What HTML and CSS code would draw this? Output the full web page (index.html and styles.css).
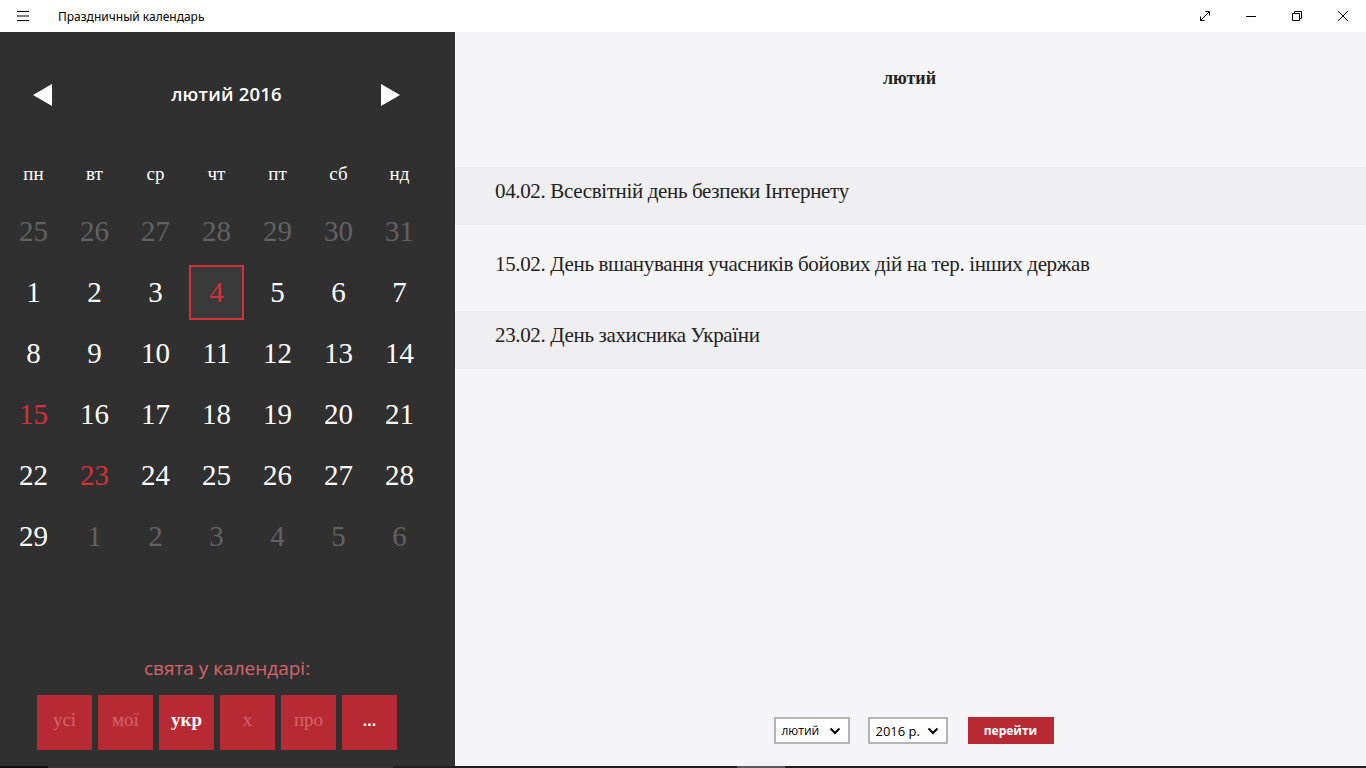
FILE: index.html
```html
<!DOCTYPE html>
<html lang="uk">
<head>
<meta charset="utf-8">
<title>Праздничный календарь</title>
<link rel="stylesheet" href="styles.css">
</head>
<body>
<div class="app">
  <header class="titlebar">
    <div class="tb-left">
      <svg class="hamburger" width="14" height="12" viewBox="0 0 14 12"><path d="M1 1.5h12M1 6h12M1 10.5h12" stroke="#000" stroke-width="1" fill="none"/></svg>
      <span class="tb-title">Праздничный календарь</span>
    </div>
    <div class="tb-controls">
      <div class="tb-btn"><svg width="12" height="12" viewBox="0 0 12 12"><path d="M1.5 10.5L10.5 1.5M1.5 10.5V6.5M1.5 10.5H5.5M10.5 1.5H6.5M10.5 1.5V5.5" stroke="#000" stroke-width="1" fill="none"/></svg></div>
      <div class="tb-btn"><svg width="12" height="12" viewBox="0 0 12 12"><path d="M1 6.5h10" stroke="#000" stroke-width="1" fill="none"/></svg></div>
      <div class="tb-btn"><svg width="12" height="12" viewBox="0 0 12 12"><path d="M1.5 3.5h7v7h-7z M3.5 3.5V1.5h7v7h-2" stroke="#000" stroke-width="1" fill="none"/></svg></div>
      <div class="tb-btn"><svg width="12" height="12" viewBox="0 0 12 12"><path d="M1 1l10 10M11 1L1 11" stroke="#000" stroke-width="1" fill="none"/></svg></div>
    </div>
  </header>

  <main class="main">
    <section class="cal">
      <div class="cal-head">
        <svg class="arrow" width="19" height="22" viewBox="0 0 19 22"><path d="M19 0V22L0 11Z" fill="#fff"/></svg>
        <div class="cal-title">лютий 2016</div>
        <svg class="arrow" width="19" height="22" viewBox="0 0 19 22"><path d="M0 0V22L19 11Z" fill="#fff"/></svg>
      </div>
      <div class="weekdays">
        <span>пн</span><span>вт</span><span>ср</span><span>чт</span><span>пт</span><span>сб</span><span>нд</span>
      </div>
      <div class="days">
        <span class="d dim">25</span><span class="d dim">26</span><span class="d dim">27</span><span class="d dim">28</span><span class="d dim">29</span><span class="d dim">30</span><span class="d dim">31</span>
        <span class="d">1</span><span class="d">2</span><span class="d">3</span><span class="d sel"><i>4</i></span><span class="d">5</span><span class="d">6</span><span class="d">7</span>
        <span class="d">8</span><span class="d">9</span><span class="d">10</span><span class="d">11</span><span class="d">12</span><span class="d">13</span><span class="d">14</span>
        <span class="d red">15</span><span class="d">16</span><span class="d">17</span><span class="d">18</span><span class="d">19</span><span class="d">20</span><span class="d">21</span>
        <span class="d">22</span><span class="d red">23</span><span class="d">24</span><span class="d">25</span><span class="d">26</span><span class="d">27</span><span class="d">28</span>
        <span class="d">29</span><span class="d dim">1</span><span class="d dim">2</span><span class="d dim">3</span><span class="d dim">4</span><span class="d dim">5</span><span class="d dim">6</span>
      </div>
      <div class="filters">
        <div class="filters-label">свята у календарі:</div>
        <div class="filter-btns">
          <span class="fb">усі</span><span class="fb">мої</span><span class="fb on">укр</span><span class="fb">х</span><span class="fb">про</span><span class="fb on dots">...</span>
        </div>
      </div>
    </section>

    <section class="events">
      <h2 class="month">лютий</h2>
      <ul class="list">
        <li class="ev alt">04.02. Всесвітній день безпеки Інтернету</li>
        <li class="ev tall">15.02. День вшанування учасників бойових дій на тер. інших держав</li>
        <li class="ev alt">23.02. День захисника України</li>
      </ul>
      <div class="goto">
        <div class="sel-box w-month"><span>лютий</span><svg width="12" height="8" viewBox="0 0 12 8"><path d="M1.5 1.5L6 6L10.5 1.5" stroke="#000" stroke-width="2" fill="none"/></svg></div>
        <div class="sel-box w-year"><span>2016 р.</span><svg width="12" height="8" viewBox="0 0 12 8"><path d="M1.5 1.5L6 6L10.5 1.5" stroke="#000" stroke-width="2" fill="none"/></svg></div>
        <div class="go">перейти</div>
      </div>
    </section>
  </main>
  <div class="hbar">
    <span class="s1"></span><span class="s2"></span><span class="s3"></span><span class="s4"></span><span class="s5"></span>
  </div>
</div>
</body>
</html>
```

FILE: styles.css
```css
* { box-sizing: border-box; }
html, body { margin: 0; padding: 0; }
body {
  width: 1366px;
  height: 768px;
  overflow: hidden;
  font-family: "Noto Sans", "Open Sans", sans-serif;
  background: #f5f5f7;
}
.app { display: flex; flex-direction: column; height: 768px; }

.titlebar {
  height: 32px;
  background: #fff;
  display: flex;
  justify-content: space-between;
  align-items: center;
  flex: none;
}
.tb-left { display: flex; align-items: center; }
.hamburger { margin-left: 16px; margin-top: 0; }
.tb-title { margin-left: 28px; font-size: 12px; color: #000; }
.tb-controls { display: flex; height: 32px; }
.tb-btn { width: 46px; height: 32px; display: flex; align-items: center; justify-content: center; }

.main { flex: 1; display: flex; min-height: 0; }

.cal {
  width: 455px;
  flex: none;
  background: #303030;
  display: flex;
  flex-direction: column;
  color: #fff;
}
.cal-head {
  display: flex;
  align-items: center;
  height: 40px;
  margin-top: 43px;
  padding: 0 55px 0 33px;
}
.cal-title {
  flex: 1;
  text-align: center;
  padding-left: 20px;
  padding-bottom: 3px;
  font-size: 18.5px;
  font-weight: 600;
  font-family: "Open Sans", "Noto Sans", sans-serif;
  letter-spacing: 0.2px;
}
.weekdays {
  display: grid;
  grid-template-columns: repeat(7, 61px);
  margin: 32px 0 0 3px;
  height: 54px;
  align-items: center;
  font-family: "Liberation Serif", serif;
  font-size: 19px;
}
.weekdays span { text-align: center; }
.days {
  display: grid;
  grid-template-columns: repeat(7, 61px);
  grid-auto-rows: 61px;
  margin-left: 3px;
  font-family: "Liberation Serif", serif;
  font-size: 29px;
}
.d { display: flex; align-items: center; justify-content: center; color: #fff; }
.d.dim { color: #626262; }
.d.red { color: #d4323b; }
.d.sel i {
  font-style: normal;
  width: 55px; height: 55px;
  display: flex; align-items: center; justify-content: center;
  border: 2px solid #d4323b;
  background: #3a3a3a;
  color: #d4323b;
}
.filters { margin-top: auto; padding-bottom: 16px; display: flex; flex-direction: column; align-items: center; }
.filters-label {
  color: #d9636c;
  font-size: 19px;
  font-family: "Open Sans", "Noto Sans", sans-serif;
  margin-left: -1px;
  line-height: 26px;
  margin-bottom: 14px;
}
.filter-btns { display: flex; gap: 6px; align-self: flex-start; padding-left: 37px; }
.fb {
  width: 55px; height: 55px;
  background: #b72a33;
  display: flex; align-items: center; justify-content: center;
  font-family: "Liberation Serif", serif;
  font-size: 19px;
  color: #d4646b;
  padding-bottom: 6px;
}
.fb.on { color: #fff; font-weight: bold; }
.fb.dots { font-family: "Liberation Sans", sans-serif; font-size: 16px; padding-bottom: 4px; }

.events {
  flex: 1;
  background: #f5f5f7;
  display: flex;
  flex-direction: column;
  min-width: 0;
}
.month {
  margin: 0;
  text-align: center;
  font-family: "Liberation Serif", serif;
  font-size: 18px;
  font-weight: bold;
  color: #222;
  margin-top: 36px;
  height: 99px;
  padding-right: 2px;
  line-height: 21px;
}
.list { list-style: none; margin: 0; padding: 0; }
.ev {
  height: 58px;
  padding-left: 40px;
  display: flex;
  align-items: center;
  padding-bottom: 9px;
  font-family: "Liberation Serif", serif;
  font-size: 21px;
  color: #222;
  letter-spacing: -0.35px;
}
.ev.alt { background: #efeff1; }
.ev.tall { height: 86px; padding-bottom: 8px; }

.goto {
  margin-top: auto;
  margin-bottom: 22px;
  display: flex;
  justify-content: center;
  align-items: center;
  gap: 18px;
  padding-left: 6px;
}
.sel-box {
  height: 27px;
  border: 2px solid #b4b4b4;
  background: #fff;
  display: flex;
  align-items: center;
  justify-content: space-between;
  padding: 0 7px 0 6px;
  font-family: "Open Sans", "Noto Sans", sans-serif;
  font-size: 12px;
  color: #000;
}
.w-month { width: 76px; }
.w-year { width: 80px; font-size: 13px; }
.go {
  width: 86px;
  height: 27px;
  margin-left: 2px;
  background: #b72a33;
  color: #fff;
  font-size: 12px;
  font-weight: bold;
  font-family: "Open Sans", "Noto Sans", sans-serif;
  display: flex; align-items: center; justify-content: center;
}

.hbar { height: 2px; display: flex; flex: none; }
.hbar span { height: 2px; display: block; }
.s1 { width: 48px; background: #111; }
.s2 { width: 345px; background: #353535; }
.s3 { width: 344px; background: #1e1e1e; }
.s4 { width: 48px; background: #5a5a5a; }
.s5 { flex: 1; background: #222; }
```
